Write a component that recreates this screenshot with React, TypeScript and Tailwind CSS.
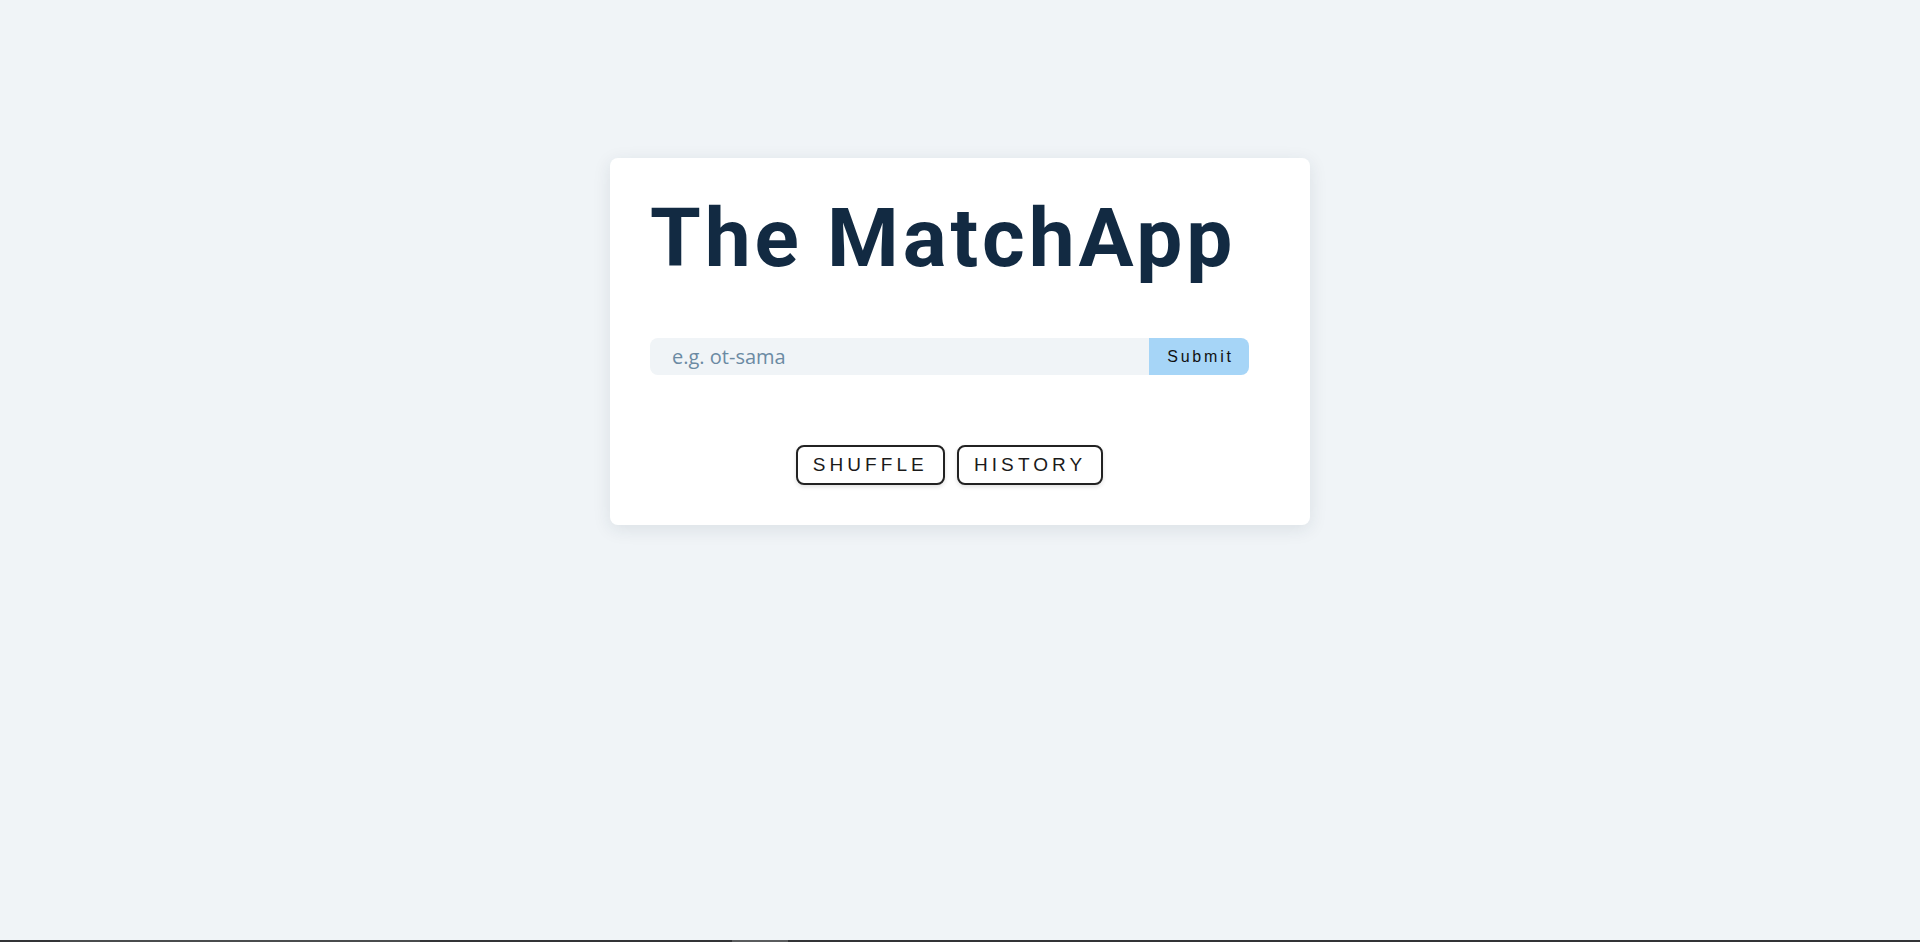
import React from "react";

export default function App() {
  return (
    <div className="min-h-screen h-[942px] flex flex-col bg-[#f0f4f7]">
      <div className="flex-1 flex justify-center items-start pt-[158px]">
        <div className="w-[700px] bg-white rounded-lg shadow-[0_4px_18px_rgba(30,50,70,0.10)] pt-[32px] px-[40px] pb-[40px]">
          <h1
            className="text-[82px] leading-[96px] font-bold tracking-[3.9px] text-[#122a42]"
            style={{ fontFamily: "Roboto, 'Liberation Sans', sans-serif" }}
          >
            The MatchApp
          </h1>
          <div className="mt-[52px] flex h-[37px] w-[599px]">
            <input
              type="text"
              placeholder="e.g. ot-sama"
              className="flex-1 min-w-0 h-full bg-[#f0f4f7] rounded-l-lg pl-[22px] text-[20px] text-[#12293f] outline-none placeholder:text-[#6b8aa3]"
              style={{ fontFamily: "'Open Sans', sans-serif" }}
            />
            <button
              className="h-full w-[100px] bg-[#a6d5f7] rounded-r-lg text-[16px] tracking-[2.8px] text-[#111] pl-[3px]"
              style={{ fontFamily: "'Liberation Sans', Arial, sans-serif" }}
            >
              Submit
            </button>
          </div>
          <div className="mt-[70px] flex justify-center gap-[12px] pr-[21px]">
            <button
              className="h-[40px] px-[15px] border-2 border-[#222] rounded-lg bg-white text-[19px] tracking-[4.1px] text-[#1a1a1a] shadow-[0_2px_4px_rgba(0,0,0,0.12)]"
              style={{ fontFamily: "'Liberation Sans', Arial, sans-serif" }}
            >
              SHUFFLE
            </button>
            <button
              className="h-[40px] px-[15px] border-2 border-[#222] rounded-lg bg-white text-[19px] tracking-[4.1px] text-[#1a1a1a] shadow-[0_2px_4px_rgba(0,0,0,0.12)]"
              style={{ fontFamily: "'Liberation Sans', Arial, sans-serif" }}
            >
              HISTORY
            </button>
          </div>
        </div>
      </div>
      <div className="h-[2px] flex bg-[#323436]">
        <div className="w-[60px]" />
        <div className="w-[360px] bg-[#4a4c4e]" />
        <div className="w-[312px]" />
        <div className="w-[56px] bg-[#5a5c5e]" />
      </div>
    </div>
  );
}
